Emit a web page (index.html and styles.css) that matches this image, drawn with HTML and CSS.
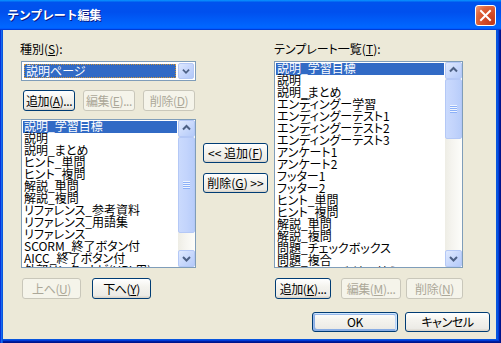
FILE: index.html
```html
<!DOCTYPE html>
<html lang="ja">
<head>
<meta charset="utf-8">
<title>テンプレート編集</title>
<link rel="stylesheet" href="styles.css">
</head>
<body>
<div class="window">
  <div class="titlebar">
    <span class="title">テンプレート編集</span>
    <div class="close">
      <svg width="19" height="19" viewBox="0 0 19 19"><path d="M5 5 L14 14 M14 5 L5 14" stroke="#fff" stroke-width="2" stroke-linecap="square" fill="none"/></svg>
    </div>
  </div>
  <div class="frame">
    <div class="panes">
      <div class="col left">
        <div class="label">種別(<u>S</u>):</div>
        <div class="combo">
          <div class="combo-sel">説明ページ</div>
          <div class="dd">
            <svg width="16" height="16" viewBox="0 0 16 16"><path d="M4.5 6.5 L8 10 L11.5 6.5" stroke="#4D6185" stroke-width="2" fill="none"/></svg>
          </div>
        </div>
        <div class="btnrow row-top">
          <div class="btn w52">追加(<u>A</u>)...</div>
          <div class="btn w52 dis">編集(<u>E</u>)...</div>
          <div class="btn w52 dis">削除(<u>D</u>)</div>
        </div>
        <div class="list list-left">
          <div class="items">
            <div class="item sel">説明_学習目標</div>
            <div class="item">説明</div>
            <div class="item">説明_まとめ</div>
            <div class="item">ヒント_単問</div>
            <div class="item">ヒント_複問</div>
            <div class="item">解説_単問</div>
            <div class="item">解説_複問</div>
            <div class="item">リファレンス_参考資料</div>
            <div class="item">リファレンス_用語集</div>
            <div class="item">リファレンス</div>
            <div class="item">SCORM_終了ボタン付</div>
            <div class="item">AICC_終了ボタン付</div>
            <div class="item">外部リンク_ナビ(URL用)</div>
          </div>
          <div class="sb">
            <div class="sb-btn"><svg width="15" height="15" viewBox="0 0 15 15"><path d="M4 8.5 L7.5 5 L11 8.5" stroke="#4D6185" stroke-width="2" fill="none"/></svg></div>
            <div class="thumb thumb-left"><div class="grip"></div></div>
            <div class="track"></div>
            <div class="sb-btn"><svg width="15" height="15" viewBox="0 0 15 15"><path d="M4 6 L7.5 9.5 L11 6" stroke="#4D6185" stroke-width="2" fill="none"/></svg></div>
          </div>
        </div>
        <div class="btnrow row-bottom-left">
          <div class="btn w59 dis">上へ(<u>U</u>)</div>
          <div class="btn w59">下へ(<u>Y</u>)</div>
        </div>
      </div>

      <div class="col mid">
        <div class="btn w65 spaced">&lt;&lt; 追加(<u>F</u>)</div>
        <div class="btn w65 spaced">削除(<u>G</u>) &gt;&gt;</div>
      </div>

      <div class="col right">
        <div class="label label-right">テンプレート一覧(<u>T</u>):</div>
        <div class="list list-right">
          <div class="items">
            <div class="item sel">説明_学習目標</div>
            <div class="item">説明</div>
            <div class="item">説明_まとめ</div>
            <div class="item">エンディングー学習</div>
            <div class="item">エンディングーテスト1</div>
            <div class="item">エンディングーテスト2</div>
            <div class="item">エンディングーテスト3</div>
            <div class="item">アンケート1</div>
            <div class="item">アンケート2</div>
            <div class="item">フッター1</div>
            <div class="item">フッター2</div>
            <div class="item">ヒント_単問</div>
            <div class="item">ヒント_複問</div>
            <div class="item">解説_単問</div>
            <div class="item">解説_複問</div>
            <div class="item">問題_チェックボックス</div>
            <div class="item">問題_複合</div>
            <div class="item">問題_ドラッグ(並べ替え)</div>
          </div>
          <div class="sb">
            <div class="sb-btn"><svg width="15" height="15" viewBox="0 0 15 15"><path d="M4 8.5 L7.5 5 L11 8.5" stroke="#4D6185" stroke-width="2" fill="none"/></svg></div>
            <div class="thumb thumb-right"><div class="grip"></div></div>
            <div class="track"></div>
            <div class="sb-btn"><svg width="15" height="15" viewBox="0 0 15 15"><path d="M4 6 L7.5 9.5 L11 6" stroke="#4D6185" stroke-width="2" fill="none"/></svg></div>
          </div>
        </div>
        <div class="btnrow row-bottom-right">
          <div class="btn w56">追加(<u>K</u>)...</div>
          <div class="btn w60 dis">編集(<u>M</u>)...</div>
          <div class="btn w57 dis">削除(<u>N</u>)</div>
        </div>
      </div>
    </div>
    <div class="footer">
      <div class="btn w86 default">OK</div>
      <div class="btn w85">キャンセル</div>
    </div>
  </div>
</div>
</body>
</html>
```
FILE: styles.css
```css
html, body {
  margin: 0;
  padding: 0;
}
body {
  width: 501px;
  height: 343px;
  overflow: hidden;
  font-family: "Noto Sans CJK JP", "Noto Sans", sans-serif;
  font-size: 12px;
  color: #000;
  background: #ECE9D8;
}
.window {
  display: flex;
  flex-direction: column;
  width: 501px;
  height: 343px;
}
.titlebar {
  height: 30px;
  flex: none;
  box-sizing: border-box;
  display: flex;
  justify-content: space-between;
  align-items: flex-start;
  padding: 0 5px 0 7px;
  background: linear-gradient(180deg, #0997ff, #0053ee 8%, #0050ee 40%, #0066ff 88%, #0066ff 93%, #005bff 95%, #003dd7 96%, #003dd7);
}
.title {
  margin-top: 9px;
  color: #fff;
  font-weight: bold;
  font-size: 12px;
  line-height: 12px;
  text-shadow: 1px 1px #0a1883;
  letter-spacing: -0.2px;
}
.close {
  margin-top: 5px;
  width: 21px;
  height: 21px;
  box-sizing: border-box;
  border: 1px solid #fff;
  border-radius: 3px;
  background: radial-gradient(circle at 85% 85%, #c2391b 0%, #d64f2a 45%, #e0673d 70%, #f29e80 100%);
  display: flex;
  align-items: center;
  justify-content: center;
}
.close svg { display: block; }

.frame {
  flex: 1;
  background: #ECE9D8;
  padding: 13px 0 0 21px;
  box-shadow:
    inset 1px 0 #0831d9,
    inset 2px 0 #166aee,
    inset 3px 0 #0855dd,
    inset -1px -1px #00138c,
    inset -2px -2px #001ea0,
    inset -3px -3px #003bda,
    inset -4px -4px #0855dd,
    inset -5px 0 #0855dd;
}
.panes {
  display: flex;
  align-items: flex-start;
}
.col {
  display: flex;
  flex-direction: column;
}
.left { width: 175px; }
.mid {
  width: 65px;
  margin-left: 7px;
  padding-top: 100px;
  gap: 10px;
}
.right {
  width: 189px;
  margin-left: 6px;
}
.label {
  height: 18px;
  line-height: 12px;
  white-space: nowrap;
  margin-left: -1px;
  font-feature-settings: "palt";
}
.label-right { margin-left: 0; }

.combo {
  box-sizing: border-box;
  height: 20px;
  border: 1px solid #7F9DB9;
  background: #fff;
  padding: 1px;
  display: flex;
  align-items: center;
}
.combo-sel {
  flex: 1;
  box-sizing: border-box;
  height: 14px;
  margin: 0 2px 0 1px;
  background: #316AC5;
  color: #fff;
  border: 1px dotted #CE953A;
  line-height: 11px;
  padding-left: 1px;
  font-feature-settings: "palt";
  white-space: nowrap;
}
.dd {
  width: 16px;
  height: 16px;
  box-sizing: border-box;
  border: 1px solid #B4C8F6;
  border-radius: 2px;
  background: linear-gradient(135deg, #DDE8FE 0%, #C6D6FC 50%, #B1C8F8 100%);
  display: flex;
  align-items: center;
  justify-content: center;
}
.dd svg, .sb-btn svg { display: block; }

.btnrow {
  display: flex;
}
.row-top {
  margin-top: 9px;
  margin-left: 2px;
  gap: 8px;
}
.row-bottom-left {
  margin-top: 10px;
  margin-left: 1px;
  gap: 11px;
}
.row-bottom-right {
  margin-top: 10px;
  margin-left: 1px;
}
.row-bottom-right .w60 { margin-left: 10px; }
.row-bottom-right .w57 { margin-left: 5px; }

.btn {
  box-sizing: border-box;
  height: 21px;
  border: 1px solid #003C74;
  border-radius: 3px;
  background: linear-gradient(180deg, #ffffff 0%, #f4f3ee 40%, #ecebe6 86%, #d6d0c5 100%);
  line-height: 12px;
  white-space: pre;
  display: flex;
  align-items: center;
  justify-content: center;
  letter-spacing: -0.4px;
  font-feature-settings: "palt";
}
.btn.spaced { letter-spacing: 0; }
.btn.dis {
  border-color: #C9C7BA;
  background: #F5F4EA;
  color: #ACA899;
}
.btn.default {
  box-shadow: inset -1px 1px #cee7ff, inset 1px 2px #98b8ea, inset -2px 2px #bcd4f6, inset 1px -1px #89ade4, inset 2px -2px #89ade4;
}
.btn u { text-decoration: underline; text-underline-offset: 1px; }
.w52 { width: 52px; }
.w56 { width: 56px; }
.w57 { width: 57px; }
.w59 { width: 59px; }
.w60 { width: 60px; }
.w65 { width: 65px; height: 20px; }
.w85 { width: 85px; height: 20px; }
.w86 { width: 86px; height: 20px; }

.list {
  box-sizing: border-box;
  border: 1px solid #7F9DB9;
  background: #fff;
  display: flex;
  overflow: hidden;
}
.list-left {
  height: 149px;
  margin-top: 8px;
}
.list-right {
  height: 207px;
}
.items {
  flex: 1;
  padding: 1px;
  overflow: hidden;
}
.item {
  height: 12px;
  line-height: 10px;
  white-space: nowrap;
  padding-left: 1px;
  font-feature-settings: "palt";
}
.item.sel {
  background: #316AC5;
  color: #fff;
}
.sb {
  width: 17px;
  flex: none;
  display: flex;
  flex-direction: column;
  background: linear-gradient(90deg, #EEEDE5 0%, #F5F4EF 40%, #FDFDFA 100%);
}
.sb-btn {
  width: 17px;
  height: 17px;
  flex: none;
  box-sizing: border-box;
  border: 1px solid #B4C8F6;
  border-radius: 2px;
  background: linear-gradient(135deg, #E0EAFE 0%, #C9D9FC 50%, #B4CAF9 100%);
  display: flex;
  align-items: center;
  justify-content: center;
}
.thumb {
  flex: none;
  box-sizing: border-box;
  border: 1px solid #B4C8F6;
  border-radius: 2px;
  background: linear-gradient(90deg, #CADAFD 0%, #C3D4FC 50%, #B8CDFA 100%);
  display: flex;
  align-items: center;
  justify-content: center;
}
.thumb-left { height: 96px; }
.thumb-right { height: 60px; }
.grip {
  width: 7px;
  height: 8px;
  background: repeating-linear-gradient(180deg, #EEF4FE 0px, #EEF4FE 1px, #8CB0F8 1px, #8CB0F8 2px);
}
.track { flex: 1; }

.footer {
  display: flex;
  justify-content: flex-end;
  gap: 7px;
  margin-top: 13px;
  padding-right: 11px;
}
```
